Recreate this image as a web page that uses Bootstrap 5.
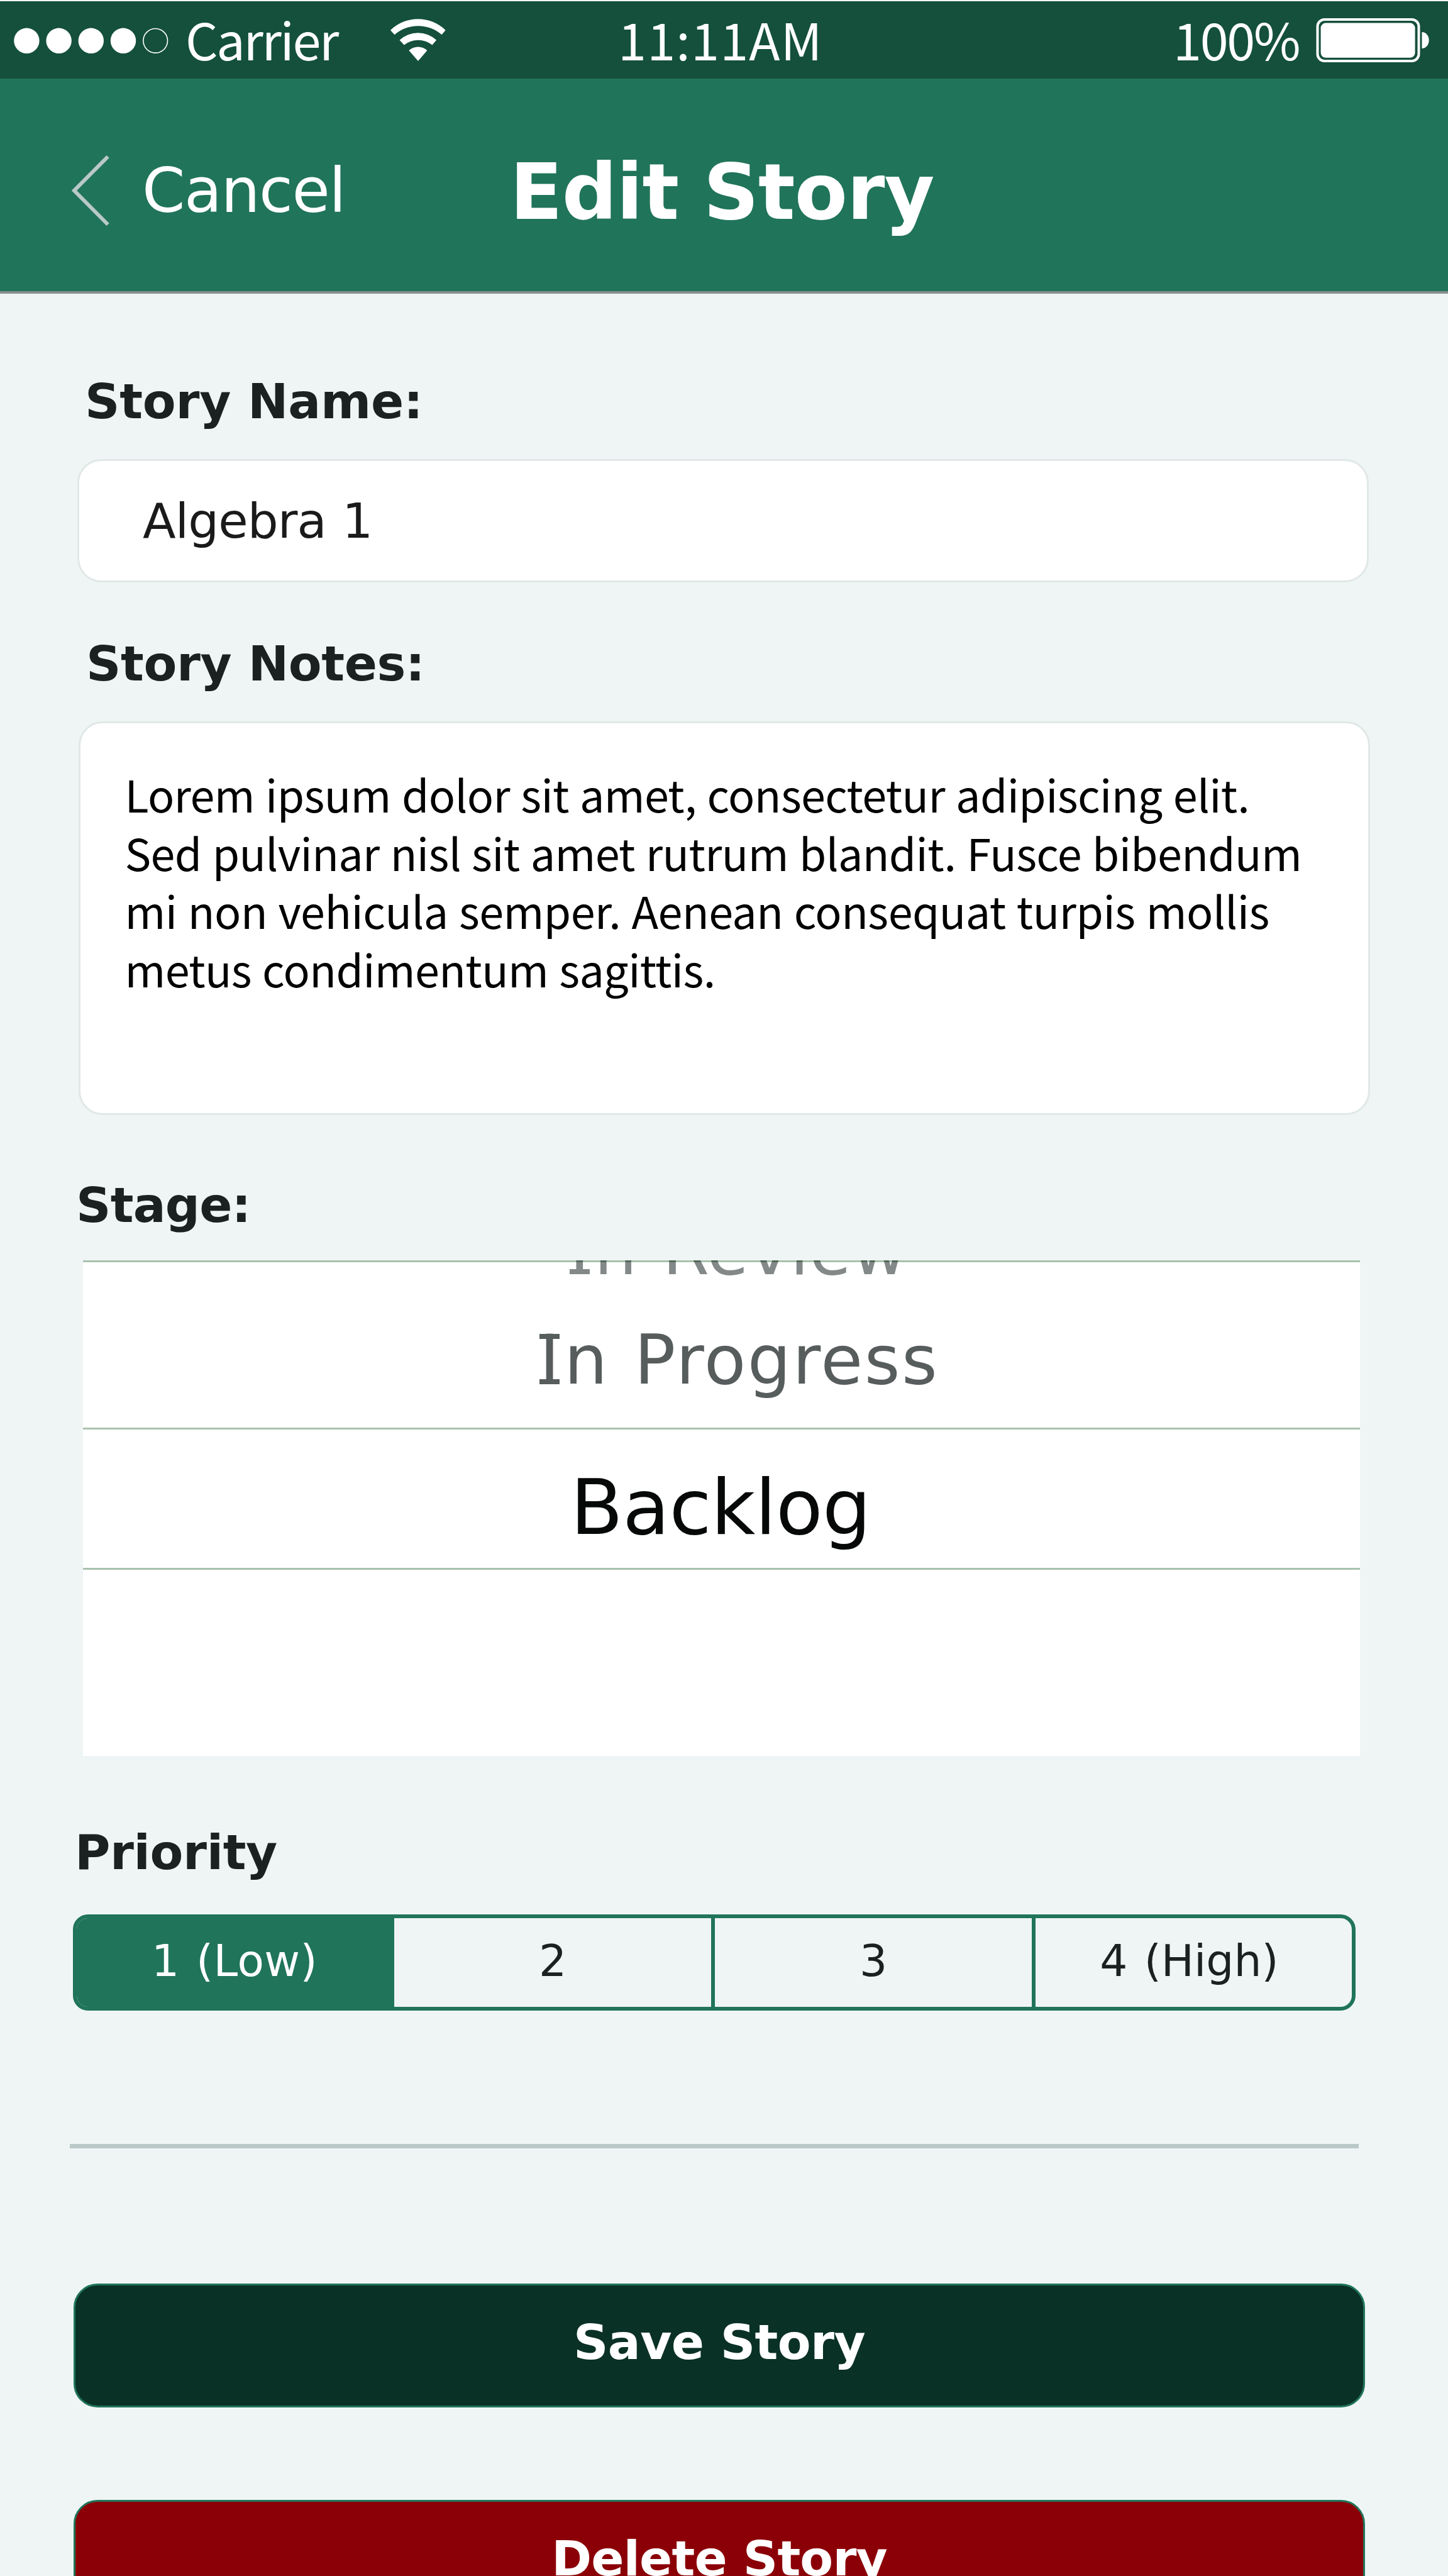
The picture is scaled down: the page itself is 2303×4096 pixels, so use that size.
<!DOCTYPE html>
<html lang="en">
<head>
<meta charset="utf-8">
<meta name="viewport" content="width=device-width, initial-scale=1">
<title>Edit Story</title>
<link href="https://cdn.jsdelivr.net/npm/bootstrap@5.3.0/dist/css/bootstrap.min.css" rel="stylesheet">
<style>
  body { background: #eff5f5; font-family: "DejaVu Sans", Verdana, sans-serif; color: #1b2020; }
  svg { display: block; flex: none; }
  .screen { height: 4096px; }

  /* status bar */
  .status-bar { height: 125px; border-top: 2px solid #f3f7f6; background: #14503b; padding: 0 30px 0 22px;
    font: 400 81px/100px "Noto Sans CJK SC", "Open Sans", sans-serif; }
  .status-bar span { margin-top: -6px; flex: none; }
  .carrier { width: 326px; margin-left: 27px; letter-spacing: -2.4px; }
  .clock { margin-left: 274px; letter-spacing: 1.2px; }
  .charge { width: 227px; letter-spacing: -2.3px; }

  /* title bar */
  .title-bar { height: 342px; padding: 18px 0 0 113px; background: #20745a; border-bottom: 4px solid #8a8f8d; }
  .cancel-link { width: 585px; margin-left: 51px; font-size: 98px; line-height: 120px; letter-spacing: -1.5px; }
  .page-title { margin-top: 6px; font-size: 122.6px; line-height: 150px; font-weight: 700; letter-spacing: -1px; word-spacing: -2px; }

  /* form */
  .field-label { font-size: 77px; line-height: 90px; font-weight: 700; display: block; margin: 0; }
  .lbl-name { margin: 127px 0 46px 135px; letter-spacing: -.2px; }
  .lbl-notes { margin: 85px 0 46px 137px; letter-spacing: -.4px; }
  .lbl-stage { margin: 99px 0 42px 121px; letter-spacing: -.8px; }
  .lbl-priority { margin: 109px 0 53px 119px; letter-spacing: -.4px; }
  .form-control { border: 3px solid #e0e8e6; border-radius: 38px; background: #fff; }
  .name-box { width: 2054px; height: 196px; margin-left: 123px; padding: 1px 0 0 101px; color: #1a1a1a;
    font-size: 77px; line-height: 90px; letter-spacing: -.9px; word-spacing: 2px; }
  .notes-box { width: 2054px; height: 626px; margin-left: 124.5px; padding: 66px 0 0 71px; color: #000;
    font: 400 70px/92.5px "Noto Sans CJK SC", "Open Sans", sans-serif; letter-spacing: -.6px; word-spacing: 2px; white-space: nowrap; }
  .looser { letter-spacing: -.48px; }

  /* stage wheel */
  .wheel { width: 2031px; height: 788px; margin-left: 132px; background: #fff linear-gradient(#a9c1ae, #a9c1ae) 0 0 / 100% 3px no-repeat; }
  .wheel-far { margin: -75px 0 0 774px; font-size: 107px; line-height: 120px; color: #838888; letter-spacing: 1.4px; word-spacing: 4px; mix-blend-mode: multiply; }
  .wheel-near { margin: 49px 0 42px 726px; font-size: 109px; line-height: 130px; color: #575d5c; letter-spacing: 2.4px; word-spacing: 3px; }
  .wheel-pick { height: 226px; padding: 54px 3px 0 0; border: solid #a9c1ae; border-width: 3px 0; font-size: 122px; line-height: 140px; color: #070909; letter-spacing: -.7px; }
  /* capital I with slab serifs */
  .slab-i { display: inline-block; width: 39.2px; background: linear-gradient(currentColor, currentColor) 0 23px / 32px 8px no-repeat, linear-gradient(currentColor, currentColor) 0 95px / 32px 8px no-repeat; }
  .wheel-far .slab-i { background-position: 0 19px, 0 89px; }

  /* priority segments */
  .segments { width: 2040px; height: 153px; margin-left: 116px; border: 6px solid #20745a; border-radius: 24px; font-size: 69.5px; line-height: 84px; }
  .seg { width: 510px; padding-bottom: 5px; border-right: 6px solid #20745a; flex: none; }
  .seg-on { width: 505px; padding-right: 3px; background: #20745a; color: #fff; border: 0; letter-spacing: .4px; word-spacing: 4px; }
  .seg-last { width: 503px; border: 0; padding-right: 14px; word-spacing: 4px; }

  .rule { width: 2050px; height: 6.5px; margin: 212px 0 215.5px 111px; background: #bac9c7; opacity: 1; border: 0; }
  .action { width: 2054px; height: 197px; margin-left: 117px; padding: 0 0 10px; border: 3px solid #20745a; border-radius: 38px;
    color: #fff; font-size: 77px; line-height: 90px; font-weight: 700; }
  .action-save { background: #0a3126; letter-spacing: -.6px; }
  .action-delete { background: #8b0007; margin-top: 147px; letter-spacing: -.85px; }
</style>
</head>
<body>
<div class="screen overflow-hidden d-flex flex-column">
  <div class="status-bar d-flex align-items-center text-white flex-shrink-0 text-nowrap">
    <svg width="246" height="42" viewBox="0 0 246 42" fill="#fff">
      <circle cx="20.4" cy="21.8" r="20.2"/><circle cx="71.6" cy="21.8" r="20.2"/><circle cx="122.8" cy="21.8" r="20.2"/><circle cx="174" cy="21.8" r="20.2"/>
      <circle cx="225.2" cy="21.8" r="19.3" fill="none" stroke="#fff" stroke-width="1.6"/>
    </svg>
    <span class="carrier">Carrier</span>
    <svg width="88" height="67" viewBox="0 0 88 67" fill="#fff">
      <path d="M0 18A62.8 62.8 0 0 1 87.6 18L81.5 25.2A57 57 0 0 0 6.5 25.2Z"/>
      <path d="M14.5 33.8A42.8 42.8 0 0 1 73.1 33.8L66.5 41.6A36 36 0 0 0 21.7 41.6Z"/>
      <path d="M29.4 50.3A20.8 20.8 0 0 1 58.4 50.3L44 66.9Z"/>
    </svg>
    <span class="clock">11:11AM</span>
    <span class="charge ms-auto">100%</span>
    <svg width="180" height="72" viewBox="0 0 180 72" fill="#fff">
      <rect x="2.5" y="3" width="161" height="66" rx="11" fill="none" stroke="#fff" stroke-width="4"/>
      <rect x="7.6" y="8.6" width="150" height="55.2" rx="8"/>
      <path d="M168.5 23C175 23 179.7 29 179.7 36S175 49 168.5 49Z"/>
    </svg>
  </div>

  <header class="title-bar d-flex align-items-center text-white flex-shrink-0 text-nowrap">
    <svg width="62" height="114" viewBox="0 0 62 114" fill="none" stroke="#b9c9c7" stroke-width="6"><path d="M58.6 3L5 57L58.6 111"/></svg>
    <div class="cancel-link">Cancel</div>
    <h1 class="page-title mb-0">Edit Story</h1>
  </header>

  <main class="flex-shrink-0">
    <label class="field-label lbl-name">Story Name:</label>
    <div class="form-control name-box d-flex align-items-center">Algebra 1</div>

    <label class="field-label lbl-notes">Story Notes:</label>
    <div class="form-control notes-box">Lorem ipsum dolor sit amet, consectetur adipiscing elit.<br>Sed pulvinar nisl sit amet rutrum blandit. Fusce bibendum<br><span class="looser">mi non vehicula semper. Aenean consequat turpis mollis</span><br>metus condimentum sagittis.</div>

    <label class="field-label lbl-stage">Stage:</label>
    <div class="wheel overflow-hidden d-flex flex-column text-nowrap">
      <div class="wheel-far"><span class="slab-i">I</span>n Review</div>
      <div class="wheel-near"><span class="slab-i">I</span>n Progress</div>
      <div class="wheel-pick text-center">Backlog</div>
    </div>

    <label class="field-label lbl-priority">Priority</label>
    <div class="segments d-flex overflow-hidden">
      <div class="seg seg-on d-flex align-items-center justify-content-center">1 (Low)</div>
      <div class="seg d-flex align-items-center justify-content-center">2</div>
      <div class="seg d-flex align-items-center justify-content-center">3</div>
      <div class="seg seg-last d-flex align-items-center justify-content-center">4 (High)</div>
    </div>

    <hr class="rule">
    <button type="button" class="btn action action-save d-block">Save Story</button>
    <button type="button" class="btn action action-delete d-block">Delete Story</button>
  </main>
</div>
<script src="https://cdn.jsdelivr.net/npm/bootstrap@5.3.0/dist/js/bootstrap.bundle.min.js"></script>
</body>
</html>
